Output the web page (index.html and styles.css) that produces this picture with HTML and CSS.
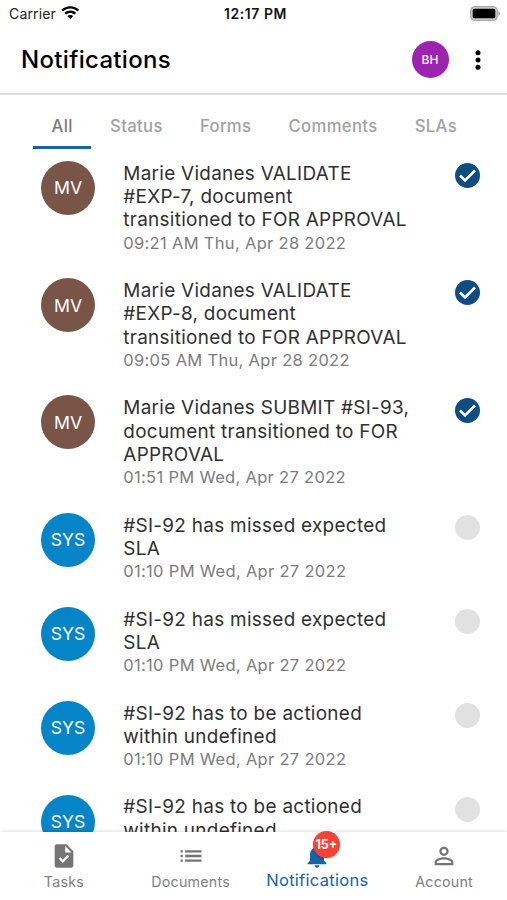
FILE: index.html
```html
<!DOCTYPE html>
<html lang="en">
<head>
<meta charset="utf-8">
<title>Notifications</title>
<link rel="stylesheet" href="styles.css">
</head>
<body>
<div class="screen">
  <div class="status-bar">
    <div class="carrier"><span>Carrier</span>
      <svg class="wifi" viewBox="0 0 19 14"><path d="M9.500 0C13 0 16.300 1.400 18.700 3.700L17 5.500C15 3.600 12.400 2.500 9.500 2.500S4 3.600 2 5.500L.3 3.700C2.700 1.400 6 0 9.500 0ZM9.500 4.500C11.800 4.500 13.900 5.400 15.500 6.900L13.800 8.600C12.700 7.500 11.200 6.900 9.500 6.900S6.300 7.500 5.200 8.600L3.500 6.900C5.100 5.400 7.200 4.500 9.500 4.500ZM9.500 9C10.700 9 11.700 9.400 12.500 10.100L9.500 13.400 6.500 10.100C7.300 9.400 8.300 9 9.500 9Z"/></svg>
    </div>
    <div class="clock">12:17 PM</div>
    <svg class="battery" viewBox="0 0 31 15"><rect x=".7" y=".7" width="26.600" height="13.600" rx="4" fill="#ccc" stroke="#aaa" stroke-width="1.200"/><rect x="2.700" y="2.700" width="22.600" height="9.600" rx="1.500" fill="#000"/><path d="M28.300 5v5q2-1 2-2.500t-2-2.500" fill="#aaa"/></svg>
  </div>
  <header class="header">
    <h1>Notifications</h1>
    <div class="user">BH</div>
    <svg class="more" viewBox="0 0 6 20"><circle cx="3" cy="2.700" r="2.500"/><circle cx="3" cy="10" r="2.500"/><circle cx="3" cy="17.300" r="2.500"/></svg>
  </header>
  <nav class="tabs">
    <div class="tab active">All</div><div class="tab">Status</div><div class="tab">Forms</div><div class="tab">Comments</div><div class="tab">SLAs</div>
  </nav>
  <main class="list">
    <article class="item"><div class="avatar mv">MV</div><div class="body"><p>Marie Vidanes VALIDATE<br>#EXP-7, document<br>transitioned to FOR APPROVAL</p><time>09:21 AM Thu, Apr 28 2022</time></div><svg class="mark" viewBox="2 2 20 20"><circle cx="12" cy="12" r="10"/><path d="M6 12l4 4 8-8"/></svg></article>
    <article class="item"><div class="avatar mv">MV</div><div class="body"><p>Marie Vidanes VALIDATE<br>#EXP-8, document<br>transitioned to FOR APPROVAL</p><time>09:05 AM Thu, Apr 28 2022</time></div><svg class="mark" viewBox="2 2 20 20"><circle cx="12" cy="12" r="10"/><path d="M6 12l4 4 8-8"/></svg></article>
    <article class="item"><div class="avatar mv">MV</div><div class="body"><p>Marie Vidanes SUBMIT #SI-93,<br>document transitioned to FOR<br>APPROVAL</p><time>01:51 PM Wed, Apr 27 2022</time></div><svg class="mark" viewBox="2 2 20 20"><circle cx="12" cy="12" r="10"/><path d="M6 12l4 4 8-8"/></svg></article>
    <article class="item"><div class="avatar sys">SYS</div><div class="body"><p>#SI-92 has missed expected<br>SLA</p><time>01:10 PM Wed, Apr 27 2022</time></div><div class="mark unread"></div></article>
    <article class="item"><div class="avatar sys">SYS</div><div class="body"><p>#SI-92 has missed expected<br>SLA</p><time>01:10 PM Wed, Apr 27 2022</time></div><div class="mark unread"></div></article>
    <article class="item"><div class="avatar sys">SYS</div><div class="body"><p>#SI-92 has to be actioned<br>within undefined</p><time>01:10 PM Wed, Apr 27 2022</time></div><div class="mark unread"></div></article>
    <article class="item"><div class="avatar sys">SYS</div><div class="body"><p>#SI-92 has to be actioned<br>within undefined</p></div><div class="mark unread"></div></article>
  </main>
  <nav class="bottom">
    <div class="dest"><svg class="icon" viewBox="0 0 24 24"><path fill-rule="evenodd" d="M14 2H6c-1.100 0-1.990.9-1.990 2L4 20c0 1.100.89 2 1.990 2H18c1.100 0 2-.9 2-2V8l-6-6zm-3.060 16L7.400 14.460l1.410-1.410 2.120 2.120 4.240-4.240 1.410 1.410L10.940 18zM13 9V3.500L18.500 9H13z"/></svg><span>Tasks</span></div>
    <div class="dest"><svg class="icon" viewBox="0 0 24 24"><path d="M3 13h2v-2H3v2zm0 4h2v-2H3v2zm0-8h2V7H3v2zm4 4h14v-2H7v2zm0 4h14v-2H7v2zM7 7v2h14V7H7z"/></svg><span>Documents</span></div>
    <div class="dest current"><div class="bell"><svg class="icon" viewBox="0 0 24 24"><path d="M12 22c1.100 0 2-.9 2-2h-4c0 1.100.89 2 2 2zm6-6v-5c0-3.070-1.640-5.640-4.500-6.320V4c0-.83-.67-1.500-1.500-1.500s-1.500.67-1.500 1.500v.68C7.630 5.360 6 7.920 6 11v5l-2 2v1h16v-1l-2-2z"/></svg><span class="badge">15+</span></div><span class="label">Notifications</span></div>
    <div class="dest"><svg class="icon" viewBox="0 0 24 24"><path fill-rule="evenodd" d="M12 5.900a2.100 2.100 0 1 1 0 4.200 2.100 2.100 0 0 1 0-4.200m0 9c2.970 0 6.100 1.460 6.100 2.100v1.100H5.900V17c0-.64 3.130-2.100 6.100-2.100M12 4C9.790 4 8 5.790 8 8s1.790 4 4 4 4-1.790 4-4-1.790-4-4-4zm0 9c-2.670 0-8 1.340-8 4v3h16v-3c0-2.660-5.330-4-8-4z"/></svg><span>Account</span></div>
  </nav>
</div>
</body>
</html>
```
FILE: styles.css
```css
* { box-sizing: border-box; }
body { margin: 0; background: #fff; font-family: Inter, "Liberation Sans", sans-serif; }
.screen { width: 507px; height: 900px; overflow: hidden; display: flex; flex-direction: column; }
.status-bar { height: 26px; flex: none; display: grid; grid-template-columns: 1fr auto 1fr; align-items: center; padding: 0 6px 0 9px; color: #222; }
.carrier { display: flex; align-items: center; gap: 5.500px; font-size: 14px; letter-spacing: .15px; }
.wifi { width: 18.500px; height: 14px; fill: #000; }
.clock { font-size: 14px; font-weight: 600; letter-spacing: .55px; margin-right: -1px; color: #111; }
.battery { width: 31px; height: 15px; justify-self: end; }
.header { height: 69px; flex: none; display: flex; align-items: center; padding: 0 26.500px 0 21px; border-bottom: 2px solid #dcdcdc; }
h1 { flex: 1; margin: 0; font-size: 24px; font-weight: 500; line-height: 30px; letter-spacing: .32px; color: #000; }
.user { width: 37px; height: 37px; border-radius: 50%; background: #9c22b0; color: #fff; display: grid; place-items: center; font-size: 12px; font-weight: 500; letter-spacing: .2px; margin-right: 26px; }
.more { width: 6px; height: 20px; }
.tabs { height: 54px; flex: none; display: flex; padding-left: 33px; }
.tab { padding: 0 18.600px; font-size: 16.700px; font-weight: 500; line-height: 62px; letter-spacing: .33px; color: #a2a2a2; height: 54px; }
.tab.active { color: #7b7b7b; border-bottom: 3px solid #1763a6; }
.list { flex: 1; min-height: 0; overflow: hidden; padding: 11.900px 26.700px 0 41px; }
.item { display: flex; align-items: flex-start; padding-bottom: 23.900px; }
.avatar { width: 54px; height: 54px; border-radius: 50%; color: #fff; display: grid; place-items: center; font-size: 17.700px; flex: none; margin-right: 28.300px; }
.mv { background: #795548; }
.sys { background: #0585c7; }
.body { flex: 1; white-space: nowrap; padding-top: .8px; margin-bottom: -.8px; }
.body p { margin: 0; font-size: 18.900px; line-height: 23.300px; letter-spacing: .3px; color: #303030; }
time { display: block; font-size: 16.500px; line-height: 23.500px; letter-spacing: .31px; color: #7c7c7c; }
.mark { width: 25px; height: 25px; margin-top: 2.200px; flex: none; }
.mark circle { fill: #0f4c81; }
.mark path { fill: none; stroke: #fff; stroke-width: 2; }
.unread { border-radius: 50%; background: #e1e1e1; }
.bottom { height: 68px; flex: none; display: grid; grid-template-columns: repeat(4, 1fr); box-shadow: 0 -1px 3px rgba(0,0,0,.12); background: #fff; color: #808080; position: relative; }
.dest { display: flex; flex-direction: column; align-items: center; padding: 10px 0 0 1px; font-size: 14.300px; line-height: 20px; letter-spacing: .2px; }
.icon { width: 28px; height: 28px; display: block; fill: #757575; margin-bottom: 2px; }
.current { color: #1763a6; font-size: 16.500px; letter-spacing: .3px; }
.current .icon { fill: #1763a6; }
.current .label { margin-top: -2px; }
.bell { position: relative; }
.badge { position: absolute; left: 9.500px; top: -11px; width: 27px; height: 27px; border-radius: 50%; background: #f44336; color: #fff; font-size: 12.500px; font-weight: 700; line-height: 28px; text-align: center; letter-spacing: 0; box-shadow: 0 1px 2px rgba(0,0,0,.2); }
```
